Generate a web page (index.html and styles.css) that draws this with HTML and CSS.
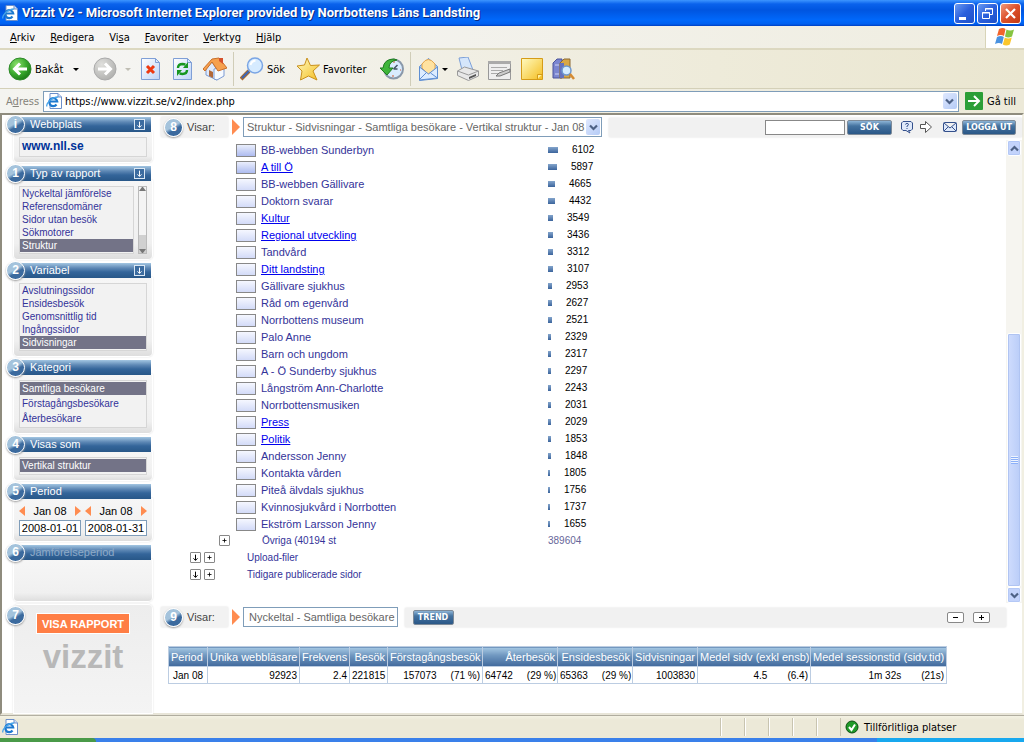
FILE: index.html
```
<!DOCTYPE html>
<html lang="sv">
<head>
    <meta charset="UTF-8">
    <meta name="viewport" content="width=device-width, initial-scale=1.0">
    <title>Vizzit V2</title>
    <link rel="stylesheet" href="styles.css">
</head>
<body>
    <!-- shared icons -->
    <svg class="defs" width="0" height="0">
        <defs>
            <radialGradient id="green" cx="35%" cy="30%" r="75%">
                <stop offset="0" stop-color="#8be06c"/><stop offset=".6" stop-color="#38a82c"/><stop offset="1" stop-color="#1c7a18"/>
            </radialGradient>
            <radialGradient id="grey" cx="35%" cy="30%" r="75%">
                <stop offset="0" stop-color="#e0e0dd"/><stop offset="1" stop-color="#b0b0ae"/>
            </radialGradient>
            <linearGradient id="paper" x1="0" y1="0" x2="1" y2="1">
                <stop offset="0" stop-color="#fff"/><stop offset="1" stop-color="#bdd3f7"/>
            </linearGradient>
            <linearGradient id="gold" x1="0" y1="0" x2="1" y2="1">
                <stop offset="0" stop-color="#fffbc0"/><stop offset="1" stop-color="#f4bd20"/>
            </linearGradient>
            <symbol id="ie" viewBox="0 0 16 16">
                <path d="M4 .5h8l3.500 3.500v11.500H4z" fill="#fff" stroke="#6d8fc9"/>
                <path d="M12 .5V4h3.500" fill="#cfe0fa" stroke="#6d8fc9"/>
                <path d="M10.500 11.500a4 4 0 1 1 .7-3H3.800" fill="none" stroke="#1c78cf" stroke-width="2.200"/>
                <path d="M1 13.500c-1.500-3 5-9.500 11-9.500" fill="none" stroke="#49a5ea" stroke-width="1.300"/>
            </symbol>
            <symbol id="chevron" viewBox="0 0 9 7">
                <path d="M1 1.500l3.500 3.500L8 1.500" fill="none" stroke="#4d6185" stroke-width="2.200"/>
            </symbol>
            <symbol id="down" viewBox="0 0 11 11">
                <path d="M5.500 2v7M3 6.500l2.500 2.500L8 6.500" fill="none" stroke="currentColor" stroke-width="1.200"/>
            </symbol>
            <symbol id="plus" viewBox="0 0 11 11">
                <path d="M5.500 3v5M3 5.500h5" fill="none" stroke="currentColor"/>
            </symbol>
        </defs>
    </svg>

    <header class="titlebar">
        <svg class="ie-icon"><use href="#ie"/></svg>
        <h1>Vizzit V2 - Microsoft Internet Explorer provided by Norrbottens Läns Landsting</h1>
        <div class="window-buttons">
            <button aria-label="Minimera"><svg viewBox="0 0 19 19"><path d="M4 14.500h7" stroke="#fff" stroke-width="3"/></svg></button>
            <button aria-label="Återställ"><svg viewBox="0 0 19 19" fill="none" stroke="#fff"><path d="M7.500 7V4.500h7v6H12M7 5h8M4.500 8.500h7v6h-7zM4 9h8"/></svg></button>
            <button class="close" aria-label="Stäng"><svg viewBox="0 0 19 19"><path d="M5 5l9 9M14 5l-9 9" stroke="#fff" stroke-width="2.200"/></svg></button>
        </div>
    </header>

    <nav class="menubar">
        <a href="#"><u>A</u>rkiv</a>
        <a href="#"><u>R</u>edigera</a>
        <a href="#">Vi<u>s</u>a</a>
        <a href="#"><u>F</u>avoriter</a>
        <a href="#"><u>V</u>erktyg</a>
        <a href="#"><u>H</u>jälp</a>
        <div class="flag">
            <svg viewBox="0 0 20 20">
                <path d="M4 2q4-2 6.500 0L9 9q-3-2-7 0z" fill="#f2642b"/>
                <path d="M11.500 2.500q3.500 2 7.500 0l-2 7q-4 2-7 0z" fill="#86c440"/>
                <path d="M2 10q4-2 6.800 0L7 17q-3-2-7 0z" fill="#4a92e0"/>
                <path d="M9.800 10.500q3.500 2 7 0l-2 7q-3.500 2-7 0z" fill="#fbc62c"/>
            </svg>
        </div>
    </nav>

    <div class="toolbar">
        <button class="tool back">
            <svg viewBox="0 0 24 24"><circle cx="12" cy="12" r="11" fill="url(#green)" stroke="#2f8a2a"/><path d="M19 12H7M12 6.500L6.500 12l5.500 5.500" fill="none" stroke="#fff" stroke-width="3"/></svg>
            Bakåt
        </button>
        <i class="caret back-caret"></i>
        <button class="tool" aria-label="Framåt">
            <svg viewBox="0 0 24 24"><circle cx="12" cy="12" r="11" fill="url(#grey)" stroke="#aaa"/><path d="M5 12h12M12 6.500l5.500 5.500-5.500 5.500" fill="none" stroke="#fff" stroke-width="3"/></svg>
        </button>
        <i class="caret pale"></i>
        <div class="tool-group">
            <button class="tool" aria-label="Stopp">
                <svg viewBox="0 0 24 24"><path d="M2.500 1.500h14l4 4v17h-18z" fill="url(#paper)" stroke="#7f9fd6"/><path d="M16.500 1.500v4h4" fill="none" stroke="#7f9fd6"/><path d="M8 9l7 7M15 9l-7 7" stroke="#ee3a12" stroke-width="3"/></svg>
            </button>
            <button class="tool" aria-label="Uppdatera">
                <svg viewBox="0 0 24 24"><path d="M2.500 1.500h14l4 4v17h-18z" fill="url(#paper)" stroke="#7f9fd6"/><path d="M16.500 1.500v4h4" fill="none" stroke="#7f9fd6"/><path d="M7 11q0-4 4.500-4l3 .5M16 13q0 4-4.500 4l-3-.5" fill="none" stroke="#16961f" stroke-width="2.400"/><path d="M12 11h5V5zM11 13H6v6z" fill="#16961f"/></svg>
            </button>
            <button class="tool" aria-label="Startsida">
                <svg viewBox="0 0 24 24">
                    <path d="M3 12l6-7 5 8v10l-11-5z" fill="#dfeafc" stroke="#7c9bd3"/>
                    <path d="M11 12l10-2v9l-7 4-3-1z" fill="#f6faff" stroke="#7c9bd3"/>
                    <path d="M0 12L9 2l7-1 8 10-9 3-6-9-7 9z" fill="#f6a04e" stroke="#c9702a"/>
                    <path d="M16 1h4v6l-4-3z" fill="#d5512b"/>
                    <path d="M6 13l4 2v6l-4-2z" fill="#b2693a"/>
                </svg>
            </button>
        </div>
        <i class="separator"></i>
        <button class="tool search">
            <svg viewBox="0 0 24 24"><path d="M1 22l8-8" stroke="#a86c32" stroke-width="4"/><path d="M2 21l7-7" stroke="#3c67b8" stroke-width="2"/><circle cx="15" cy="8.500" r="7.500" fill="#d6ebff" stroke="#7aa5e4" stroke-width="1.500"/><path d="M10.500 8q1-4 5-4.500" fill="none" stroke="#fff" stroke-width="2"/></svg>
            Sök
        </button>
        <button class="tool favourites">
            <svg viewBox="0 0 24 24"><path d="M11 1l3.500 7.500 9-.5-6.500 6 4 9-8.500-4-8 4 1.500-9L1 9l7.500-1z" fill="url(#gold)" stroke="#c9911d"/></svg>
            Favoriter
        </button>
        <button class="tool" aria-label="Tidigare">
            <svg viewBox="0 0 24 24"><circle cx="13.500" cy="12" r="9.500" fill="#d9ecff" stroke="#8a98aa" stroke-width="2"/><path d="M13.500 12l4-4M13.500 12h4" stroke="#456" stroke-width="1.500"/><path d="M14 4v2M13 18v2M20 13h1" stroke="#d35a31"/><path d="M0 11h3q1-9 11-9l3 1q-8 1-8 8h4l-6 7z" fill="#3fb53a" stroke="#207d20"/></svg>
        </button>
        <i class="separator"></i>
        <button class="tool" aria-label="E-post">
            <svg viewBox="0 0 24 24"><path d="M2.500 9.500l9-8 9 8v12l-18 2z" fill="#a9cff5" stroke="#5f8fd3"/><path d="M5 11V7q6-9 13 0v6l-7 4z" fill="#ffe2a0" stroke="#e7a64a"/><path d="M2.500 10l9 7 9-7v11l-18 2z" fill="#dcecff" stroke="#5f8fd3"/><path d="M2.500 22.500l7-7M20.500 21l-7-5" stroke="#5f8fd3"/></svg>
        </button>
        <i class="caret mail-caret"></i>
        <div class="tool-group">
            <button class="tool" aria-label="Skriv ut">
                <svg viewBox="0 0 24 24"><path d="M6 13L3 1l9-1 5 13z" fill="#d5e6fb" stroke="#7ca0d8"/><path d="M1.500 14l7-4 14 4v5l-10 4.500-11-5z" fill="#e8e8e8" stroke="#999"/><path d="M1.500 14l11 4 10-4" fill="none" stroke="#999"/><path d="M13 20l7-3v2l-7 3z" fill="#555"/></svg>
            </button>
            <button class="tool" aria-label="Redigera">
                <svg viewBox="0 0 24 24"><path d="M.5 4.500h22v18H.5z" fill="#eee" stroke="#999"/><path d="M0 5.500h23" stroke="#aaa" stroke-width="3"/><path d="M3 10.500h16M3 13.500h12M3 16.500h7" stroke="#aaa"/><path d="M8 19l3-3 11-4v3l-10 4z" fill="#ccc" stroke="#777"/></svg>
            </button>
            <button class="tool" aria-label="Anteckning">
                <svg viewBox="0 0 24 24"><path d="M1.500 1.500h21v21h-21z" fill="url(#gold)" stroke="#d59c18"/><path d="M17.500 22v-4.500h4.500" fill="#fff0a0" stroke="#d59c18"/></svg>
            </button>
            <button class="tool" aria-label="Referens">
                <svg viewBox="0 0 24 24"><path d="M1 6l4-4h5v19H1z" fill="#7b86d0" stroke="#4a539a"/><path d="M8 6l4-4h6v19H8z" fill="#d9a746" stroke="#8b6a35"/><path d="M8 6h4v15H8z" fill="#6672bd"/><path d="M3 8h4M3 17h4" stroke="#cfd4f5"/><circle cx="14.500" cy="13.500" r="4.500" fill="#d5ecff" stroke="#6c97cf" stroke-width="1.500"/><path d="M18 17l4 5" stroke="#d58b32" stroke-width="2.500"/></svg>
            </button>
        </div>
    </div>

    <form class="addressbar">
        <label for="address">A<u>d</u>ress</label>
        <div class="address-field">
            <svg class="ie-icon"><use href="#ie"/></svg>
            <input id="address" type="text" value="https://www.vizzit.se/v2/index.php">
            <button type="button" class="drop" aria-label="Visa adresser"><svg><use href="#chevron"/></svg></button>
        </div>
        <button type="button" class="go">
            <svg viewBox="0 0 18 18"><rect width="18" height="18" rx="1" fill="#2b9e37"/><path d="M3 9h11M9 4l5 5-5 5" fill="none" stroke="#fff" stroke-width="2"/></svg>
            Gå till
        </button>
    </form>

    <div class="page">
        <aside class="sidebar">
            <section class="panel">
                <h2><b class="badge">i</b>Webbplats<button class="toggle" aria-label="Visa"><svg><use href="#down"/></svg></button></h2>
                <div class="panel-body"><div class="box site">www.nll.se</div></div>
            </section>
            <section class="panel">
                <h2><b class="badge">1</b>Typ av rapport<button class="toggle" aria-label="Visa"><svg><use href="#down"/></svg></button></h2>
                <div class="panel-body scrolled">
                    <ul class="box">
                        <li><a href="#">Nyckeltal jämförelse</a></li>
                        <li><a href="#">Referensdomäner</a></li>
                        <li><a href="#">Sidor utan besök</a></li>
                        <li><a href="#">Sökmotorer</a></li>
                        <li class="selected"><a href="#">Struktur</a></li>
                    </ul>
                    <div class="small-scroll"><i class="up"></i><i class="thumb"></i><i class="dn"></i></div>
                </div>
            </section>
            <section class="panel">
                <h2><b class="badge">2</b>Variabel<button class="toggle" aria-label="Visa"><svg><use href="#down"/></svg></button></h2>
                <div class="panel-body">
                    <ul class="box">
                        <li><a href="#">Avslutningssidor</a></li>
                        <li><a href="#">Ensidesbesök</a></li>
                        <li><a href="#">Genomsnittlig tid</a></li>
                        <li><a href="#">Ingångssidor</a></li>
                        <li class="selected"><a href="#">Sidvisningar</a></li>
                    </ul>
                </div>
            </section>
            <section class="panel">
                <h2><b class="badge">3</b>Kategori</h2>
                <div class="panel-body">
                    <ul class="box loose">
                        <li class="selected"><a href="#">Samtliga besökare</a></li>
                        <li><a href="#">Förstagångsbesökare</a></li>
                        <li><a href="#">Återbesökare</a></li>
                    </ul>
                </div>
            </section>
            <section class="panel">
                <h2><b class="badge">4</b>Visas som</h2>
                <div class="panel-body">
                    <ul class="box single">
                        <li class="selected"><a href="#">Vertikal struktur</a></li>
                    </ul>
                </div>
            </section>
            <section class="panel">
                <h2><b class="badge">5</b>Period</h2>
                <div class="panel-body period">
                    <div class="month">
                        <div class="month-row"><i class="prev"></i><label for="from">Jan 08</label><i class="next"></i></div>
                        <input id="from" type="text" value="2008-01-01">
                    </div>
                    <div class="month">
                        <div class="month-row"><i class="prev"></i><label for="to">Jan 08</label><i class="next"></i></div>
                        <input id="to" type="text" value="2008-01-31">
                    </div>
                </div>
            </section>
            <section class="panel disabled">
                <h2><b class="badge">6</b>Jämförelseperiod</h2>
                <div class="panel-body"></div>
            </section>
            <section class="panel report">
                <b class="badge">7</b>
                <button class="show-report">VISA RAPPORT</button>
                <div class="logo">vizzit</div>
            </section>
        </aside>

        <main class="main">
            <div class="strip">
                <div class="strip-label"><b class="badge">8</b><label for="view">Visar:</label></div>
                <i class="arrow"></i>
                <div class="view-select">
                    <select id="view">
                        <option>Struktur - Sidvisningar - Samtliga besökare - Vertikal struktur - Jan 08</option>
                    </select>
                    <span class="drop"><svg><use href="#chevron"/></svg></span>
                </div>
                <div class="strip-tools top-tools">
                    <input type="text" class="search-field" aria-label="Sök">
                    <button class="pill find">SÖK</button>
                    <button class="icon" aria-label="Hjälp"><svg viewBox="0 0 14 14" fill="#dfe9fa" stroke="#34508c"><path d="M3 1.500h8l1.500 1.500v6L11 10.500H8.500L10 13l-4-2.500H3L1.500 9V3z"/><path d="M5.500 4.500q0-1 1.500-1t1.500 1q0 1-1.500 1.500v1M7 8v1" fill="none"/></svg></button>
                    <button class="icon forward" aria-label="Skicka"><svg viewBox="0 0 14 14" fill="#fff" stroke="#555"><path d="M6.500 1.500v3h-5v4h5v4l6-5.500z"/></svg></button>
                    <button class="icon" aria-label="E-post"><svg viewBox="0 0 14 14" fill="#dfe9fa" stroke="#34508c"><path d="M1.500 2.500h11q1 0 1 1v7q0 1-1 1h-11q-1 0-1-1v-7q0-1 1-1zM1 3l6 5 6-5M1 11l4-4M13 11L9 7"/></svg></button>
                    <button class="pill logout">LOGGA UT</button>
                </div>
            </div>

            <div class="tree-frame">
                <div class="tree">
                    <ul id="rows"></ul>
                    <div class="tree-row others">
                        <button class="mini" aria-label="Expandera"><svg><use href="#plus"/></svg></button>
                        <span class="name">Övriga (40194 st</span>
                        <span class="total">389604</span>
                    </div>
                    <div class="tree-row folder">
                        <button class="mini" aria-label="Ned"><svg><use href="#down"/></svg></button>
                        <button class="mini" aria-label="Expandera"><svg><use href="#plus"/></svg></button>
                        <span class="name">Upload-filer</span>
                    </div>
                    <div class="tree-row folder">
                        <button class="mini" aria-label="Ned"><svg><use href="#down"/></svg></button>
                        <button class="mini" aria-label="Expandera"><svg><use href="#plus"/></svg></button>
                        <span class="name">Tidigare publicerade sidor</span>
                    </div>
                </div>
                <div class="scrollbar">
                    <button class="scroll-btn flip" aria-label="Upp"><svg><use href="#chevron"/></svg></button>
                    <div class="track"><div class="scroll-thumb"><i></i></div></div>
                    <button class="scroll-btn" aria-label="Ned"><svg><use href="#chevron"/></svg></button>
                </div>
            </div>

            <div class="lower">
                <div class="strip">
                    <div class="strip-label"><b class="badge">9</b>Visar:</div>
                    <i class="arrow"></i>
                    <div class="view-name">Nyckeltal - Samtliga besökare</div>
                    <div class="strip-tools">
                        <button class="pill trend">TREND</button>
                        <button class="resize minus" aria-label="Mindre"><svg viewBox="0 0 11 11"><path d="M3 5.500h5" stroke="#000"/></svg></button>
                        <button class="resize" aria-label="Större"><svg><use href="#plus"/></svg></button>
                    </div>
                </div>
                <table class="figures">
                    <colgroup>
                        <col class="c-period"><col class="c-unique"><col class="c-freq"><col class="c-visits"><col class="c-first">
                        <col class="c-return"><col class="c-return"><col class="c-pages"><col class="c-avg"><col class="c-time">
                    </colgroup>
                    <thead>
                        <tr>
                            <th class="left">Period</th><th>Unika webbläsare</th><th>Frekvens</th><th>Besök</th><th>Förstagångsbesök</th>
                            <th>Återbesök</th><th>Ensidesbesök</th><th>Sidvisningar</th><th>Medel sidv (exkl ensb)</th><th>Medel sessionstid (sidv.tid)</th>
                        </tr>
                    </thead>
                    <tbody>
                        <tr>
                            <td class="mid">Jan 08</td><td>92923</td><td>2.4</td><td>221815</td>
                            <td>157073<span>(71 %)</span></td>
                            <td>64742<span>(29 %)</span></td>
                            <td>65363<span>(29 %)</span></td>
                            <td>1003830</td>
                            <td>4.5<span class="wide">(6.4)</span></td>
                            <td>1m 32s<span class="wide">(21s)</span></td>
                        </tr>
                    </tbody>
                </table>
            </div>
        </main>
    </div>

    <footer class="statusbar">
        <svg class="ie-icon"><use href="#ie"/></svg>
        <div class="cells"><i></i><i></i><i></i><i></i><i></i></div>
        <div class="zone">
            <svg viewBox="0 0 14 14"><circle cx="7" cy="7" r="6" fill="#1f9a28" stroke="#0b4d10"/><path d="M4 7l2.500 3L10 4.500" fill="none" stroke="#fff" stroke-width="2"/></svg>
            Tillförlitliga platser
        </div>
    </footer>
    <div class="taskbar"><i class="start"></i><i class="tray"></i></div>

    <script>
        // name, page views, has sub pages
        const pages = [
            ['BB-webben Sunderbyn', 6102],
            ['A till Ö', 5897, true],
            ['BB-webben Gällivare', 4665],
            ['Doktorn svarar', 4432],
            ['Kultur', 3549, true],
            ['Regional utveckling', 3436, true],
            ['Tandvård', 3312],
            ['Ditt landsting', 3107, true],
            ['Gällivare sjukhus', 2953],
            ['Råd om egenvård', 2627],
            ['Norrbottens museum', 2521],
            ['Palo Anne', 2329],
            ['Barn och ungdom', 2317],
            ['A - Ö Sunderby sjukhus', 2297],
            ['Långström Ann-Charlotte', 2243],
            ['Norrbottensmusiken', 2031],
            ['Press', 2029, true],
            ['Politik', 1853, true],
            ['Andersson Jenny', 1848],
            ['Kontakta vården', 1805],
            ['Piteå älvdals sjukhus', 1756],
            ['Kvinnosjukvård i Norrbotten', 1737],
            ['Ekström Larsson Jenny', 1655]
        ];

        document.getElementById('rows').innerHTML = pages.map(([name, views, link]) => `
            <li class="tree-row">
                <span class="folder-box ${views > 5000 ? 'hot' : ''}"></span>
                <span class="name">${link ? `<a href="#">${name}</a>` : name}</span>
                <span class="bar" style="width: ${Math.floor(views / 610)}px"></span>
                <span class="views">${views}</span>
            </li>`).join('');
    </script>
</body>
</html>
```
FILE: styles.css
```
* {
    box-sizing: border-box;
}

body {
    margin: 0;
    min-height: 100vh;
    display: flex;
    flex-direction: column;
    font-family: "Liberation Sans", Arial, sans-serif;
    font-size: 11px;
    color: #000;
    background: #ece9d8;
}

button {
    font: inherit;
    color: inherit;
    padding: 0;
    border: none;
    background: none;
}

input, select {
    font: inherit;
    min-width: 0;
}

a {
    color: inherit;
    text-decoration: none;
}

ul {
    list-style: none;
    margin: 0;
    padding: 0;
}

svg {
    display: block;
    flex: none;
}

.defs {
    position: absolute;
}

.ie-icon {
    width: 16px;
    height: 16px;
}

/* browser window */

.titlebar {
    height: 26px;
    display: flex;
    align-items: center;
    padding: 0 3px 0 2px;
    background: linear-gradient(#3d95ff 0, #0a62ec 4px, #0055e0 10px, #0068fb 20px, #0060f0 24px, #003fc0);
    color: #fff;
}

.titlebar h1 {
    flex: 1;
    margin: 0 0 0 4px;
    font-family: Roboto, sans-serif;
    font-size: 13px;
    line-height: 26px;
    white-space: nowrap;
    text-shadow: 1px 1px #0a2a80;
}

.window-buttons {
    display: flex;
    gap: 2px;
}

.window-buttons button {
    width: 21px;
    height: 21px;
    border: 1px solid #fff;
    border-radius: 3px;
    background: linear-gradient(135deg, #6a9bf2, #2a5fdc 50%, #1e50c8);
}

.window-buttons .close {
    background: linear-gradient(135deg, #f09a7c, #dc4f2a 50%, #c23a14);
}

.menubar, .toolbar, .addressbar, .statusbar {
    font-family: "DejaVu Sans Condensed", "Noto Sans", sans-serif;
}

.menubar {
    height: 24px;
    display: flex;
    align-items: center;
    gap: 15px;
    padding-left: 10px;
    border-bottom: 2px solid #dcd8c0;
    background: linear-gradient(90deg, #f6f6f6, #efede0);
}

.flag {
    align-self: stretch;
    width: 39px;
    margin-left: auto;
    padding: 1px 9px;
    border-left: 1px solid #d8d4b8;
    background: #fff;
}

.flag svg {
    width: 20px;
    height: 20px;
}

.toolbar {
    height: 39px;
    display: flex;
    align-items: center;
    padding-left: 8px;
    border-bottom: 1px solid #d4d0b8;
    background: linear-gradient(90deg, #f6f6f6, #eeebda 70%, #eae6d0);
}

.tool {
    display: flex;
    align-items: center;
    gap: 3px;
    white-space: nowrap;
}

.tool svg {
    width: 24px;
    height: 24px;
}

.back {
    width: 64px;
}

.search {
    width: 56px;
}

.favourites {
    width: 84px;
}

.tool-group {
    display: flex;
    gap: 8px;
}

.caret {
    margin: 0 8px;
    border: 3px solid transparent;
    border-top-color: #000;
    border-bottom: 0;
}

.back-caret {
    margin: 0 14px 0 1px;
}

.mail-caret {
    margin: 0 8px 0 1px;
}

.pale {
    border-top-color: #c0beb4;
}

.separator {
    width: 1px;
    height: 34px;
    margin: 0 6px;
    background: #d0cdb8;
}

.addressbar {
    height: 24px;
    display: flex;
    align-items: center;
    padding: 0 8px 0 6px;
    background: linear-gradient(90deg, #f4f4f0, #ece9d8);
}

.addressbar label {
    width: 37px;
    color: #85837a;
}

.address-field {
    flex: 1;
    height: 21px;
    display: flex;
    align-items: center;
    padding: 0 1px 0 2px;
    border: 1px solid #7f9db9;
    background: #fff;
}

.address-field input {
    flex: 1;
    margin-left: 3px;
    padding: 0;
    border: none;
}

.drop {
    width: 14px;
    height: 16px;
    display: grid;
    place-items: center;
    border-radius: 2px;
    background: linear-gradient(135deg, #dfe8fe, #b5cbf6);
}

.drop svg, .scroll-btn svg {
    width: 9px;
    height: 7px;
}

.go {
    display: flex;
    align-items: center;
    gap: 4px;
    margin-left: 6px;
}

.go svg {
    width: 18px;
    height: 18px;
}

.statusbar {
    height: 23px;
    display: flex;
    align-items: center;
    padding-left: 2px;
    border-top: 1px solid #b0ad9f;
    background: linear-gradient(#f4f2e4, #ece9d8 4px);
}

.cells {
    display: flex;
    margin-left: auto;
}

.cells i {
    width: 24px;
    height: 18px;
    border-left: 1px solid #c8c4b0;
    box-shadow: inset 1px 0 #fff;
}

.zone {
    width: 184px;
    height: 18px;
    display: flex;
    align-items: center;
    gap: 5px;
    padding-left: 4px;
    border-left: 1px solid #c8c4b0;
}

.zone svg {
    width: 14px;
    height: 14px;
}

.taskbar {
    height: 4px;
    display: flex;
    justify-content: space-between;
    background: #3a80ea;
}

.start {
    width: 96px;
    border-radius: 0 4px 0 0;
    background: #4a9a48;
}

.tray {
    width: 147px;
    background: #18a8ee;
}

/* vizzit page */

.page {
    flex: 1;
    display: flex;
    border: 2px solid #8f8c7e;
    border-right-color: #f1efe2;
    border-bottom-color: #e8e5d8;
    background: #fff;
}

.sidebar {
    width: 150px;
    flex: none;
    display: flex;
    flex-direction: column;
    padding: 2px 0 0 12px;
}

.panel {
    margin-bottom: 4px;
}

.panel h2 {
    position: relative;
    display: flex;
    justify-content: space-between;
    height: 15px;
    margin: 0 1px 0 2px;
    padding: 0 6px 0 14px;
    font-size: 11px;
    font-weight: normal;
    line-height: 15px;
    color: #fff;
    background: linear-gradient(#a3c6e2, #5e88b5 5px, #34659a 9px, #285788);
}

.badge {
    width: 19px;
    height: 19px;
    border: 1px solid #fff;
    border-radius: 50%;
    font-size: 12px;
    line-height: 17px;
    text-align: center;
    color: #fff;
    background: linear-gradient(150deg, #a4c3dc 45%, #3b6a9e 60%);
    box-shadow: 0 1px 2px #999;
}

.panel .badge {
    position: absolute;
    left: -10px;
    top: -2px;
}

.toggle {
    width: 11px;
    height: 11px;
    margin-top: 2px;
    border: 1px solid #dbe8f4;
    background: #3c6ca0;
}

.toggle svg {
    width: 9px;
    height: 9px;
}

.panel-body {
    padding: 5px;
    border-radius: 0 0 4px 4px;
    background: linear-gradient(#f6f6f6, #f0f0f0 80%, #dedede);
    box-shadow: 0 0 0 1px #fff, 0 0 2px 1px #ddd;
}

.box {
    flex: 1;
    min-height: 18px;
    border: 1px solid #d6d6d6;
    background: #f2f2f2;
    font-size: 10px;
    line-height: 13px;
    color: #333399;
}

ul.box {
    padding-bottom: 1px;
}

.box li {
    padding-left: 2px;
    white-space: nowrap;
}

.box .selected {
    color: #fff;
    background: #737387;
}

.box.loose {
    display: flex;
    flex-direction: column;
    gap: 2px;
    padding: 1px 0 2px;
}

.box.single {
    padding: 1px 0;
}

.site {
    height: 20px;
    padding-left: 2px;
    font-size: 12px;
    font-weight: bold;
    line-height: 17px;
    color: #003399;
}

.scrolled {
    display: flex;
    gap: 4px;
}

.small-scroll {
    width: 9px;
    display: flex;
    flex-direction: column;
    border: 1px solid #bbb;
    background: #f4f4f4;
}

.small-scroll .up, .small-scroll .dn {
    border: 3px solid transparent;
    border-bottom: 4px solid #777;
    border-top: 0;
}

.small-scroll .dn {
    border-top: 4px solid #777;
    border-bottom: 0;
    background: #d0d0d0;
}

.small-scroll .thumb {
    height: 14px;
    margin-top: auto;
    background: #d0d0d0;
}

.period {
    display: flex;
    gap: 4px;
    font-size: 11px;
}

.month {
    flex: 1;
}

.month-row {
    display: flex;
    align-items: center;
    justify-content: space-between;
    height: 13px;
    margin-bottom: 3px;
}

.prev, .next {
    border: 5px solid transparent;
    border-left: 6px solid #ff8c50;
    border-right: 0;
}

.prev {
    border-right: 6px solid #ff8c50;
    border-left: 0;
}

.month input {
    display: block;
    width: 100%;
    height: 16px;
    padding: 0;
    border: 1px solid #7f9db9;
    text-align: center;
    background: #fff;
}

.disabled h2 {
    justify-content: flex-start;
    color: #8fabc8;
}

.disabled .panel-body {
    min-height: 41px;
}

.report {
    position: relative;
    flex: 1;
    display: flex;
    flex-direction: column;
    align-items: center;
    min-height: 108px;
    margin: 0;
    padding-top: 8px;
    border-radius: 4px 4px 0 0;
    background: linear-gradient(#ededed, #f4f4f4);
    box-shadow: 0 0 0 1px #fff, 0 0 2px 1px #ddd;
}

.report .badge {
    left: -8px;
    top: 1px;
}

.show-report {
    width: 94px;
    height: 21px;
    border: 1px solid #fff;
    background: #ff7e45;
    color: #fff;
    font-weight: bold;
}

.logo {
    margin-top: 4px;
    font-size: 33px;
    font-weight: bold;
    line-height: 38px;
    color: #b8b8b8;
}

.main {
    flex: 1;
    min-width: 0;
    display: flex;
    flex-direction: column;
    padding-left: 9px;
}

.strip {
    display: flex;
    align-items: center;
    height: 20px;
    color: #666;
}

.main > .strip {
    margin: 2px 0 3px;
}

.strip-label {
    display: flex;
    align-items: center;
    gap: 4px;
    width: 67px;
    height: 20px;
    padding-left: 3px;
    color: #444;
    background: #f2f2f2;
    box-shadow: 0 0 2px #ddd;
}

.arrow {
    margin: 0 3px 0 4px;
    border: 8px solid transparent;
    border-left-color: #ff8c50;
    border-right: 0;
}

.view-select {
    display: flex;
    align-items: center;
    width: 359px;
    height: 20px;
    padding-right: 1px;
    border: 1px solid #7f9db9;
}

.view-select select {
    flex: 1;
    padding: 0 0 0 3px;
    border: none;
    appearance: none;
    color: #666;
    background: #fff;
}

.view-name {
    height: 20px;
    padding: 0 2px 0 5px;
    border: 1px solid #7f9db9;
    line-height: 18px;
}

.strip-tools {
    flex: 1;
    display: flex;
    align-items: center;
    height: 19px;
    margin: 0 16px 0 7px;
    padding: 0 16px 0 8px;
    background: #f1f1f1;
    box-shadow: 0 0 2px #ddd;
}

.top-tools {
    justify-content: flex-end;
    margin-right: 0;
    padding-right: 6px;
}

.search-field {
    width: 80px;
    height: 15px;
    margin-right: 2px;
    border: 1px solid #888;
    background: #fff;
}

.pill {
    height: 15px;
    border: 1px solid #7d8a98;
    border-radius: 2px;
    font-family: "DejaVu Sans", sans-serif;
    font-size: 8px;
    line-height: 13px;
    font-weight: bold;
    color: #fff;
    background: linear-gradient(#8db4d6, #44729f 5px, #2a5787);
}

.find {
    width: 45px;
    margin-right: 8px;
}

.logout {
    width: 54px;
    margin-left: 5px;
}

.trend {
    width: 41px;
    margin-right: auto;
}

.icon svg {
    width: 14px;
    height: 14px;
}

.forward {
    margin: 0 10px 0 5px;
}

.resize {
    width: 17px;
    height: 11px;
    border: 1px solid #888;
    border-radius: 2px;
    color: #000;
    background: #fff;
}

.resize svg {
    width: 11px;
    height: 11px;
    margin: -1px auto;
}

.minus {
    margin-right: 9px;
}

.tree-frame {
    flex: 1;
    display: flex;
}

.tree {
    flex: 1;
    padding: 2px 0 0 29px;
    color: #333399;
}

.tree-row {
    display: flex;
    align-items: center;
    height: 17px;
    line-height: 17px;
}

#rows .tree-row {
    padding-left: 46px;
}

.folder-box {
    width: 20px;
    height: 13px;
    margin-right: 5px;
    border: 1px solid #888;
    background: linear-gradient(#f5f7ff, #d3dbf8);
}

.hot {
    background: linear-gradient(#eaeefc, #aebcf0);
}

#rows .name {
    width: 287px;
}

.name a {
    color: #0000ee;
    text-decoration: underline;
}

.bar {
    height: 6px;
    margin-right: 14px;
    margin-bottom: 2px;
    background: linear-gradient(#84a5cc, #3b649c);
}

.views {
    font-size: 10px;
    line-height: 13px;
    margin-bottom: 2px;
    color: #000;
}

.mini {
    width: 11px;
    height: 11px;
    margin-right: 3px;
    border: 1px solid #888;
    border-radius: 1px;
    background: #fff;
    color: #000;
}

.mini svg {
    width: 9px;
    height: 9px;
}

.others, .folder {
    padding-bottom: 2px;
    font-size: 10px;
}

.others {
    padding-left: 29px;
}

.others .name {
    width: 315px;
    padding-left: 29px;
}

.total {
    color: #666699;
}

.folder .name {
    padding-left: 29px;
}

.scrollbar {
    width: 16px;
    display: flex;
    flex-direction: column;
    background: #f6f5f0;
}

.scroll-btn {
    width: 14px;
    height: 16px;
    display: grid;
    place-items: center;
    margin-left: 1px;
    border: 1px solid #fff;
    border-radius: 2px;
    background: #c3d3fb;
    box-shadow: inset 0 0 0 1px #b4c8f6;
}

.flip svg {
    transform: rotate(180deg);
}

.track {
    flex: 1;
    display: flex;
    flex-direction: column;
    justify-content: flex-end;
    padding-left: 1px;
}

.scroll-thumb {
    width: 14px;
    height: 59%;
    display: grid;
    place-items: center;
    border: 1px solid #fff;
    border-radius: 2px;
    background: linear-gradient(90deg, #cfdcfd, #bacdf8);
    box-shadow: inset 0 0 0 1px #b0c4f2;
}

.scroll-thumb i {
    width: 7px;
    height: 8px;
    background: repeating-linear-gradient(#eef4fe 0 1px, #8cb0f8 1px 2px);
}

.lower {
    padding: 4px 0 29px;
}

.figures {
    table-layout: fixed;
    width: 778px;
    margin: 19px 0 0 7px;
    border-collapse: collapse;
    white-space: nowrap;
}

.figures th, .figures td {
    padding: 0 2px;
    border: 1px solid #bccde2;
    text-align: right;
}

.figures th {
    height: 20px;
    font-weight: normal;
    color: #fff;
    background: linear-gradient(#a6c8e4, #6f97c0 8px, #41699c);
}

.figures td {
    height: 17px;
    font-size: 10px;
}

.figures .left {
    text-align: left;
}

.figures .mid {
    text-align: center;
}

.figures span {
    margin-left: 14px;
}

.figures .wide {
    margin-left: 20px;
}

.c-period { width: 39px; }
.c-unique { width: 92px; }
.c-freq { width: 50px; }
.c-visits { width: 38px; }
.c-first { width: 95px; }
.c-return { width: 75px; }
.c-pages { width: 65px; }
.c-avg { width: 113px; }
.c-time { width: 136px; }
```
